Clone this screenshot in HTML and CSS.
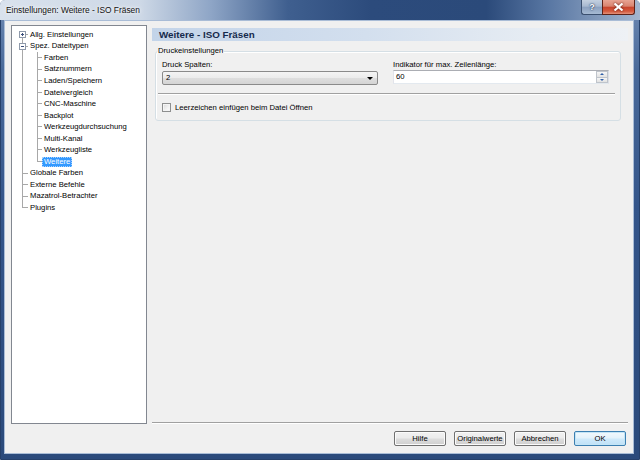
FILE: index.html
```html
<!DOCTYPE html>
<html lang="de">
<head>
<meta charset="utf-8">
<title>Einstellungen</title>
<link rel="stylesheet" href="styles.css">
</head>
<body>
<div class="window">
  <div class="titlebar">
    <span class="title">Einstellungen: Weitere - ISO Fräsen</span>
    <div class="caption">
      <div class="cap help">?</div>
      <div class="cap close">
        <svg width="11" height="8" viewBox="0 0 11 8"><path d="M1.5 0.5 L9.5 7.5 M9.5 0.5 L1.5 7.5" stroke="#fff" stroke-width="2.2" fill="none"/></svg>
      </div>
    </div>
  </div>
  <div class="client">
    <div class="main">
      <div class="tree">
        <ul class="root">
          <li class="first"><div class="row"><span class="exp"><svg width="7" height="7" viewBox="0 0 7 7"><rect x="0.5" y="0.5" width="6" height="6" fill="#fff" stroke="#8f9aab"/><path d="M2 3.5 H5 M3.5 2 V5" stroke="#3b4f7a" stroke-width="1"/></svg></span><span class="lbl">Allg. Einstellungen</span></div></li>
          <li><div class="row"><span class="exp"><svg width="7" height="7" viewBox="0 0 7 7"><rect x="0.5" y="0.5" width="6" height="6" fill="#fff" stroke="#8f9aab"/><path d="M2 3.5 H5" stroke="#3b4f7a" stroke-width="1"/></svg></span><span class="lbl">Spez. Dateitypen</span></div>
            <ul class="sub">
              <li><div class="row"><span class="lbl">Farben</span></div></li>
              <li><div class="row"><span class="lbl">Satznummern</span></div></li>
              <li><div class="row"><span class="lbl">Laden/Speichern</span></div></li>
              <li><div class="row"><span class="lbl">Dateivergleich</span></div></li>
              <li><div class="row"><span class="lbl">CNC-Maschine</span></div></li>
              <li><div class="row"><span class="lbl">Backplot</span></div></li>
              <li><div class="row"><span class="lbl">Werkzeugdurchsuchung</span></div></li>
              <li><div class="row"><span class="lbl">Multi-Kanal</span></div></li>
              <li><div class="row"><span class="lbl">Werkzeugliste</span></div></li>
              <li class="last"><div class="row"><span class="lbl sel">Weitere</span></div></li>
            </ul>
          </li>
          <li><div class="row"><span class="lbl">Globale Farben</span></div></li>
          <li><div class="row"><span class="lbl">Externe Befehle</span></div></li>
          <li><div class="row"><span class="lbl">Mazatrol-Betrachter</span></div></li>
          <li class="last"><div class="row"><span class="lbl">Plugins</span></div></li>
        </ul>
      </div>
      <div class="panel">
        <div class="header">Weitere - ISO Fräsen</div>
        <fieldset class="group">
          <legend>Druckeinstellungen</legend>
          <div class="fields">
            <div class="field">
              <div class="flabel">Druck Spalten:</div>
              <div class="combo"><span class="val">2</span><span class="arrow"></span></div>
            </div>
            <div class="field">
              <div class="flabel">Indikator für max. Zeilenlänge:</div>
              <div class="spin"><span class="val">60</span>
                <div class="spinbtns"><div class="sb"><span class="up"></span></div><div class="sb"><span class="down"></span></div></div>
              </div>
            </div>
          </div>
          <div class="sep"></div>
          <div class="check"><span class="box"></span><span>Leerzeichen einfügen beim Datei Öffnen</span></div>
        </fieldset>
        <div class="fill"></div>
        <div class="hr"></div>
      </div>
    </div>
    <div class="buttons">
      <div class="btn">Hilfe</div>
      <div class="btn">Originalwerte</div>
      <div class="btn">Abbrechen</div>
      <div class="btn default">OK</div>
    </div>
  </div>
</div>
</body>
</html>
```
FILE: styles.css
```css
* { box-sizing: border-box; }
html, body { margin: 0; padding: 0; }
body {
  width: 640px;
  height: 460px;
  overflow: hidden;
  font-family: "Liberation Sans", Arial, sans-serif;
  font-size: 7.7px;
  color: #000;
  background: #fff;
}
.window {
  width: 640px;
  height: 460px;
  display: flex;
  flex-direction: column;
  background: linear-gradient(to bottom, #6f8ab3 0%, #4a6a9a 15%, #34558a 45%, #2b4a7b 100%);
  border: 1px solid #26406a;
  border-radius: 5px 5px 0 0;
}
.titlebar {
  height: 20px;
  display: flex;
  align-items: flex-start;
  background: linear-gradient(90deg, #d9e2ed 0%, #cdd8e6 22%, #8ea5c6 33%, #3f5f8f 45%, #2c4b7c 58%, #2b4a7a 76%, #5a78a4 86%, #a4b6cf 100%);
  margin: -1px -1px 0 -1px;
  border-radius: 5px 5px 0 0;
}
.title {
  margin: 5px 0 0 6px;
  font-size: 8.4px;
  line-height: 10px;
  color: #111;
  text-shadow: 0 0 6px #fff, 0 0 3px #fff;
}
.caption {
  margin-left: auto;
  margin-right: 5px;
  display: flex;
}
.cap {
  height: 15px;
  display: flex;
  align-items: center;
  justify-content: center;
  border: 1px solid #3a4f6f;
  border-top: none;
}
.help {
  width: 21px;
  border-radius: 0 0 0 3px;
  border-right: none;
  background: linear-gradient(to bottom, #c4d0e0 0%, #a8b9d0 45%, #8ba0bf 50%, #a6bad3 100%);
  color: #fff;
  font-weight: bold;
  font-size: 9px;
  text-shadow: 0 0 2px #1d3559, 0 0 1px #1d3559;
}
.close {
  width: 33px;
  border-radius: 0 0 3px 0;
  background: linear-gradient(to bottom, #e8a493 0%, #d98470 45%, #c7432c 50%, #d4593d 80%, #e4917a 100%);
  border-color: #5e2218;
}
.close svg { filter: drop-shadow(0 0 1px #5c1a10); }

.client {
  flex: 1;
  margin: 0 5px 5px 3px;
  background: #f0f0f0;
  border: 1px solid #a9bcd6;
  display: flex;
  flex-direction: column;
  padding: 4px 5px 6px 6px;
}
.main {
  height: 399px;
  display: flex;
}
.tree {
  width: 136px;
  height: 399px;
  background: #fff;
  border: 1px solid #828790;
  padding-top: 3px;
}
ul { list-style: none; margin: 0; padding: 0; }
.root > li { position: relative; padding-left: 16px; }
.sub > li { position: relative; padding-left: 14px; }
.row {
  height: 11.55px;
  display: flex;
  align-items: center;
  white-space: nowrap;
}
.lbl {
  display: inline-block;
  line-height: 8px;
  height: 10px;
  padding: 0 1px;
  border: 1px solid transparent;
}
.lbl.sel {
  background: #3399ff;
  color: #fff;
  border: 1px dotted #a9d2ff;
}
.root > li::before, .sub > li::before {
  content: "";
  position: absolute;
  top: 5px;
  height: 0;
  border-top: 1px solid #a8a8a8;
}
.root > li::before { left: 10px; width: 6px; }
.sub > li::before { left: 9px; width: 5px; }
.root > li::after, .sub > li::after {
  content: "";
  position: absolute;
  top: 0;
  bottom: 0;
  border-left: 1px solid #a8a8a8;
}
.root > li::after { left: 10px; }
.sub > li::after { left: 9px; }
.root > li.first::after { top: 5px; }
.root > li.last::after, .sub > li.last::after { bottom: auto; height: 6px; }
.exp {
  position: absolute;
  left: 7px;
  top: 2px;
  width: 7px;
  height: 7px;
  z-index: 1;
  display: block;
}
.exp svg { display: block; }

.panel {
  flex: 1;
  margin-left: 5px;
  display: flex;
  flex-direction: column;
  padding-top: 3px;
}
.header {
  height: 13px;
  line-height: 13px;
  padding-left: 7px;
  font-size: 9.8px;
  font-weight: bold;
  color: #152a4c;
  background: linear-gradient(90deg, #c3d4e9 0%, #d3dfee 45%, #e6ecf3 80%, #eef1f5 100%);
}
.group {
  margin: 5px 7px 0 3px;
  padding: 4px 5px 8px 6px;
  border: 1px solid #d5dfe5;
  border-radius: 3px;
  box-shadow: inset 1px 1px 0 #fff;
}
.group legend {
  padding: 0 1px;
  margin-left: -5px;
  line-height: 10px;
  color: #000;
}
.fields {
  display: grid;
  grid-template-columns: 216px 216px;
  column-gap: 15px;
}
.flabel {
  line-height: 10px;
  height: 10px;
}
.combo {
  margin-top: 1px;
  height: 14px;
  border: 1px solid #8a8a8a;
  border-radius: 2px;
  background: linear-gradient(to bottom, #f4f4f4 0%, #ececec 48%, #dedede 52%, #d4d4d4 100%);
  display: flex;
  align-items: center;
  padding-left: 3px;
  padding-right: 4px;
}
.val { flex: 1; line-height: 10px; }
.arrow {
  width: 0;
  height: 0;
  border-left: 3px solid transparent;
  border-right: 3px solid transparent;
  border-top: 3px solid #000;
}
.spin {
  margin-top: 0;
  height: 14px;
  border: 1px solid #abadb3;
  border-left-color: #e2e3ea;
  border-right-color: #dbdfe6;
  border-bottom-color: #e3e9ef;
  background: #fff;
  display: flex;
  align-items: center;
  padding-left: 2px;
}
.spinbtns {
  width: 12px;
  height: 12px;
  display: flex;
  flex-direction: column;
}
.sb {
  flex: 1;
  border: 1px solid #bfc4cb;
  background: linear-gradient(to bottom, #f6f6f6, #e2e2e2);
  display: flex;
  align-items: center;
  justify-content: center;
}
.sb + .sb { border-top: none; }
.up, .down { width: 0; height: 0; border-left: 2px solid transparent; border-right: 2px solid transparent; }
.up { border-bottom: 2px solid #2f5fa8; }
.down { border-top: 2px solid #2f5fa8; }
.sep {
  margin: 8px 0 0 -4px;
  width: 457px;
  height: 2px;
  border-top: 1px solid #a0a0a0;
  border-bottom: 1px solid #fff;
}
.check {
  margin-top: 7px;
  height: 10px;
  display: flex;
  align-items: center;
  gap: 4px;
}
.box {
  width: 9px;
  height: 9px;
  border: 1px solid #8e8f8f;
  background: linear-gradient(135deg, #d8d8d8 0%, #f2f2f2 60%, #fdfdfd 100%);
  box-shadow: inset 0 0 0 1px #f4f4f4;
}
.fill { flex: 1; }
.hr {
  height: 2px;
  border-top: 1px solid #a0a0a0;
  border-bottom: 1px solid #fff;
}
.buttons {
  margin-top: 7px;
  margin-right: 2px;
  display: flex;
  justify-content: flex-end;
  gap: 8px;
}
.btn {
  width: 52px;
  height: 15px;
  border: 1px solid #707070;
  border-radius: 2px;
  background: linear-gradient(to bottom, #f2f2f2 0%, #ebebeb 48%, #dddddd 52%, #cfcfcf 100%);
  box-shadow: inset 0 0 0 1px #fbfbfb;
  display: flex;
  align-items: center;
  justify-content: center;
  line-height: 10px;
}
.btn.default {
  border-color: #3c7fb1;
  background: linear-gradient(to bottom, #f2f9fd 0%, #e3f2fb 48%, #d0eafa 52%, #bfe1f7 100%);
  box-shadow: inset 0 0 0 1px #c4e5f6;
}
```
